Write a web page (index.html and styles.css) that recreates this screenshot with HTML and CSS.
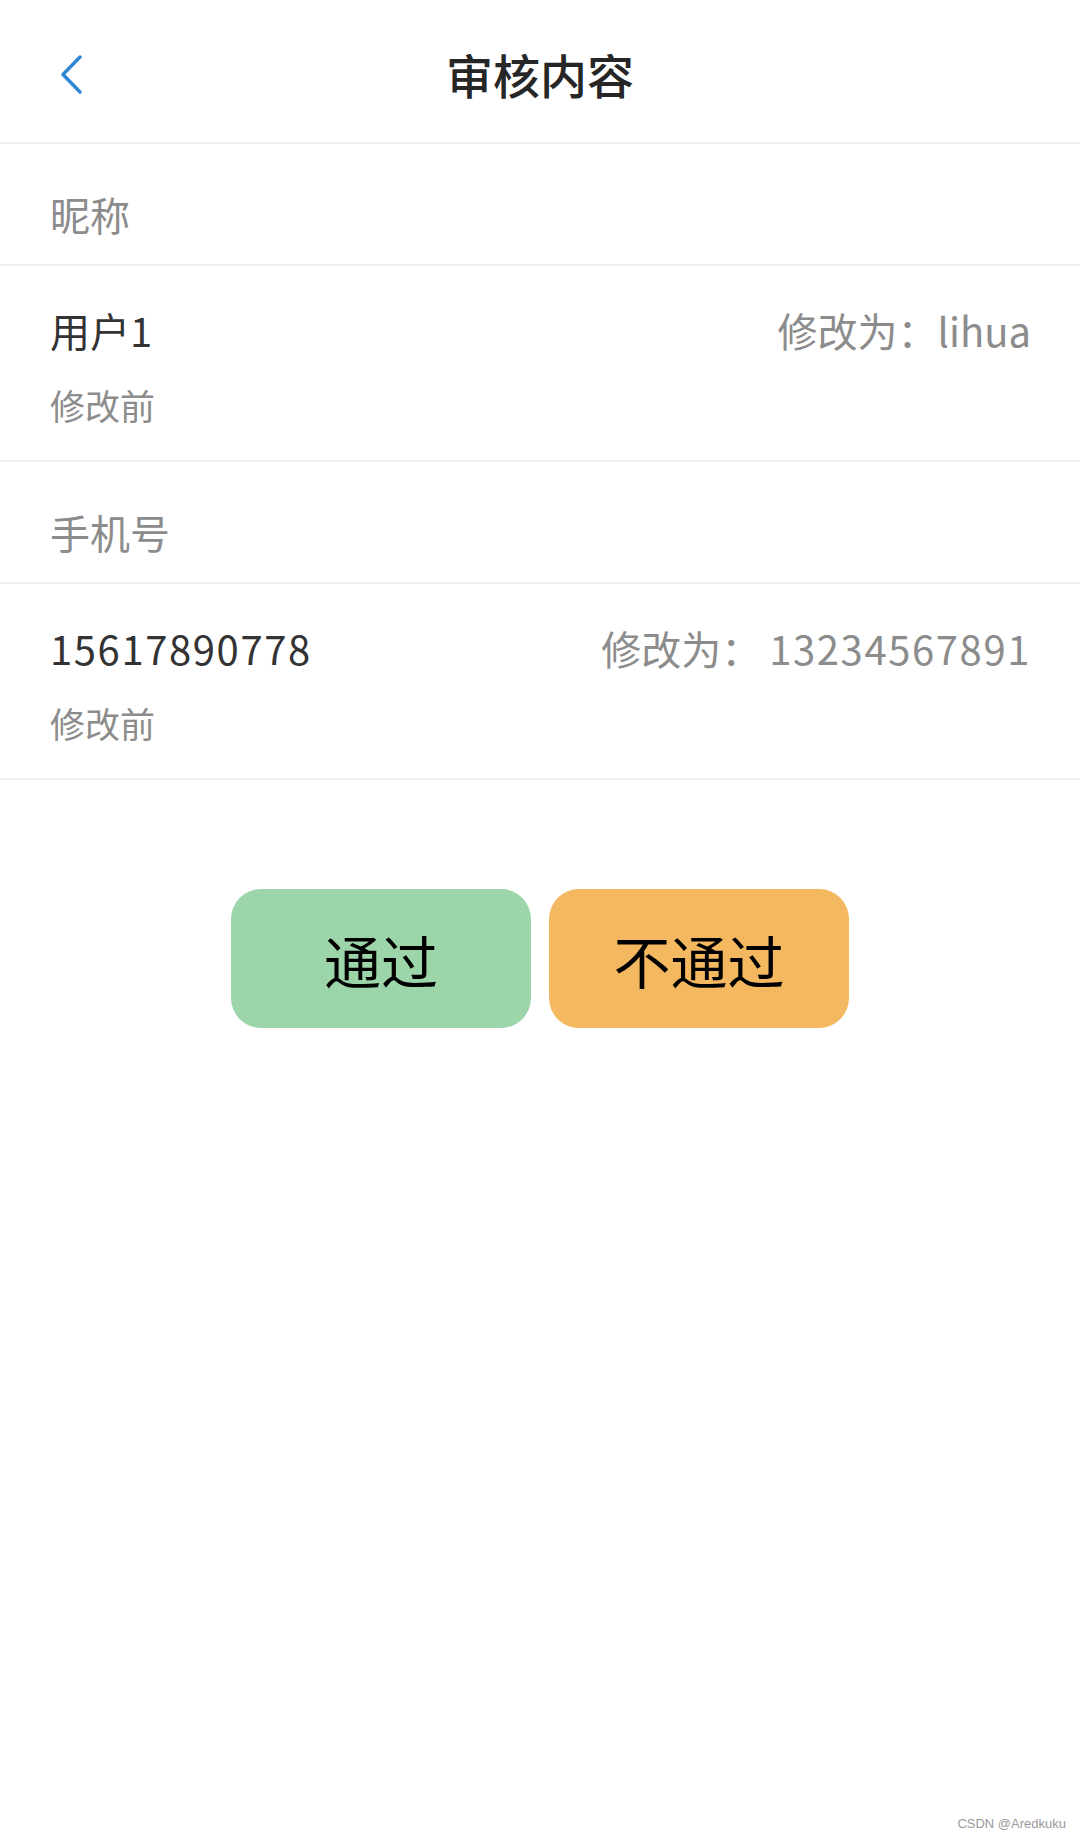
FILE: index.html
```html
<!DOCTYPE html>
<html lang="zh-CN">
<head>
    <meta charset="UTF-8">
    <meta name="viewport" content="width=device-width, initial-scale=1.0">
    <title>审核内容</title>
    <link rel="stylesheet" href="styles.css">
</head>
<body>
    <div class="header">
        <a class="back" href="#">
            <svg width="26" height="40" viewBox="0 0 26 40">
                <path d="M21 3 L4 20.5 L21 38" fill="none" stroke="#2f86d6" stroke-width="3.4" stroke-linecap="round" stroke-linejoin="round"/>
            </svg>
        </a>
        <h1 class="title">审核内容</h1>
        <span></span>
    </div>

    <!-- 昵称 -->
    <div class="section-label">昵称</div>
    <div class="change-row">
        <div class="change-main">
            <span class="old-value">用户1</span>
            <span class="new-value">修改为：lihua</span>
        </div>
        <div class="before-tag">修改前</div>
    </div>

    <!-- 手机号 -->
    <div class="section-label">手机号</div>
    <div class="change-row">
        <div class="change-main">
            <span class="old-value num">15617890778</span>
            <span class="new-value">修改为：<span class="num">13234567891</span></span>
        </div>
        <div class="before-tag">修改前</div>
    </div>

    <div class="actions">
        <button class="btn btn-pass">通过</button>
        <button class="btn btn-reject">不通过</button>
    </div>

    <div class="watermark">CSDN @Aredkuku</div>
</body>
</html>
```

FILE: styles.css
```css
* {
    box-sizing: border-box;
}
body {
    margin: 0;
    min-height: 1839px;
    background: #fff;
    font-family: "Noto Sans CJK SC", "Noto Sans", sans-serif;
    color: #333;
    position: relative;
}
.header {
    height: 144px;
    display: grid;
    grid-template-columns: 1fr auto 1fr;
    align-items: center;
    border-bottom: 2px solid #efefef;
    padding-top: 6px;
}
.back {
    display: flex;
    padding-left: 59px;
}
.title {
    margin: 0;
    font-size: 47px;
    font-weight: 500;
    color: #262626;
    line-height: 60px;
}
.section-label {
    padding: 50px 50px 0;
    height: 122px;
    font-size: 40px;
    line-height: 40px;
    color: #8c8c8c;
    border-bottom: 2px solid #efefef;
}
.change-row {
    padding: 44px 49px 0 50px;
    height: 196px;
    border-bottom: 2px solid #efefef;
}
.change-main {
    display: flex;
    justify-content: space-between;
    align-items: center;
    line-height: 40px;
}
.old-value {
    font-size: 40px;
    color: #333;
}
.new-value {
    font-size: 40px;
    color: #8c8c8c;
}
.num {
    letter-spacing: 1.6px;
}
.new-value .num {
    margin-left: 8px;
}
.before-tag {
    margin-top: 35px;
    font-size: 35px;
    line-height: 40px;
    color: #8c8c8c;
}
.actions {
    display: flex;
    justify-content: center;
    gap: 18px;
    margin-top: 109px;
}
.btn {
    width: 300px;
    height: 139px;
    border: none;
    border-radius: 30px;
    font-family: "Noto Sans CJK SC", sans-serif;
    font-size: 57px;
    color: #000;
    cursor: pointer;
}
.btn-pass {
    background-color: #9dd5aa;
}
.btn-reject {
    background-color: #f4b960;
}
.watermark {
    position: absolute;
    right: 14px;
    bottom: 8px;
    font-family: "Liberation Sans", Arial, sans-serif;
    font-size: 13px;
    color: #9a9a9a;
}
```
